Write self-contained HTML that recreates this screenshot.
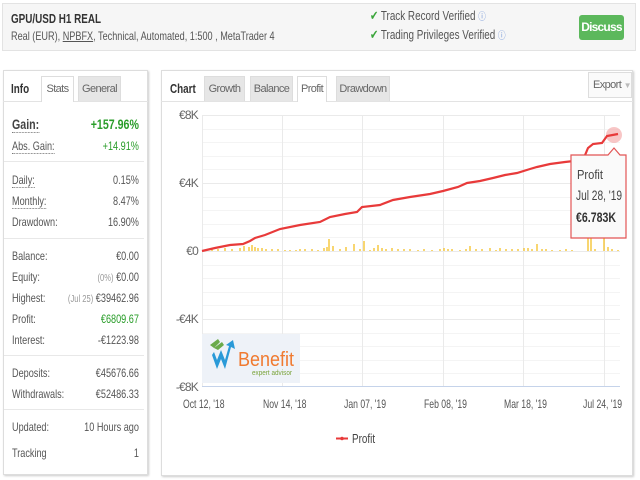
<!DOCTYPE html><html><head><meta charset="utf-8"><style>
*{margin:0;padding:0;box-sizing:border-box}
body{width:640px;height:480px;background:#fff;font-family:"Liberation Sans",sans-serif;font-size:12px;color:#555;position:relative;overflow:hidden}
.a{position:absolute;white-space:nowrap}
.s{transform:scaleX(.76);transform-origin:0 0}
.hdr{left:2px;top:3px;width:634px;height:48px;background:#f6f6f6;border:1px solid #e3e3e3}
.panel{background:#fff;border:1px solid #ddd;box-shadow:1px 1px 2px #ccc}
.tab{position:absolute;height:25px;background:#e6e6e6;border:1px solid #ddd;border-bottom:none;text-align:center;line-height:25px;color:#666;font-size:11px;letter-spacing:-.6px;white-space:nowrap;overflow:hidden}
.tab.on{background:#fff;height:26px}
.row{position:absolute;left:12px;width:167px;white-space:nowrap;transform:scaleX(.76);transform-origin:0 0}
.row span{float:right}
.sep{position:absolute;left:4px;width:140px;border-top:1px solid #e8e8e8}
.g{color:#2a9d2a}
.dl{border-bottom:1px dotted #777;font-style:normal}
.yl{position:absolute;left:158px;width:40px;text-align:right;color:#666;letter-spacing:-.8px}
.xl{position:absolute;top:397px;color:#555;white-space:nowrap;transform:scaleX(.72);transform-origin:0 0}
</style></head><body>
<div class="a hdr"></div>
<div class="a s" style="left:11px;top:11px;font-weight:bold;color:#333;font-size:13px">GPU/USD H1 REAL</div>
<div class="a s" style="left:11px;top:29px;color:#555;font-size:12px">Real (EUR), <u>NPBFX</u>, Technical, Automated, 1:500 , MetaTrader 4</div>
<div class="a s" style="left:370px;top:8px;color:#555;font-size:13px"><span style="color:#3aa53a">✔</span> Track Record Verified <span style="color:#6b8fd6;font-size:10px">ⓘ</span></div>
<div class="a s" style="left:370px;top:27px;color:#555;font-size:13px"><span style="color:#3aa53a">✔</span> Trading Privileges Verified <span style="color:#6b8fd6;font-size:10px">ⓘ</span></div>
<div class="a" style="left:579px;top:15px;width:45px;height:25px;background:#5cb85c;border-radius:3px;color:#fff;font-weight:bold;text-align:center;line-height:25px;font-size:12px;letter-spacing:-.8px">Discuss</div>

<div class="a panel" style="left:3px;top:70px;width:145px;height:405px"></div>
<div class="a s" style="left:11px;top:81px;font-weight:bold;color:#333;font-size:13px">Info</div>
<div class="tab" style="left:78px;top:76px;width:43px">General</div>
<div class="a" style="left:3px;top:101px;width:145px;border-top:1px solid #e3e3e3"></div>
<div class="tab on" style="left:41px;top:76px;width:33px">Stats</div>

<div class="row" style="top:116px;font-weight:bold;font-size:14px;color:#444"><b class="dl">Gain:</b><span class="g">+157.96%</span></div>
<div class="row" style="top:139px"><i class="dl">Abs. Gain:</i><span class="g">+14.91%</span></div>
<div class="sep" style="top:161px"></div>
<div class="row" style="top:173px"><i class="dl">Daily:</i><span>0.15%</span></div>
<div class="row" style="top:194px"><i class="dl">Monthly:</i><span>8.47%</span></div>
<div class="row" style="top:215px">Drawdown:<span>16.90%</span></div>
<div class="sep" style="top:238px"></div>
<div class="row" style="top:249px">Balance:<span>€0.00</span></div>
<div class="row" style="top:270px">Equity:<span><small style="color:#999">(0%)</small> €0.00</span></div>
<div class="row" style="top:291px">Highest:<span><small style="color:#999;font-size:10px">(Jul 25)</small> €39462.96</span></div>
<div class="row" style="top:312px">Profit:<span class="g">€6809.67</span></div>
<div class="row" style="top:333px">Interest:<span>-€1223.98</span></div>
<div class="sep" style="top:355px"></div>
<div class="row" style="top:366px">Deposits:<span>€45676.66</span></div>
<div class="row" style="top:387px">Withdrawals:<span>€52486.33</span></div>
<div class="sep" style="top:409px"></div>
<div class="row" style="top:420px">Updated:<span>10 Hours ago</span></div>
<div class="row" style="top:446px">Tracking<span>1</span></div>

<div class="a panel" style="left:161px;top:70px;width:472px;height:406px"></div>
<div class="a s" style="left:170px;top:81px;font-weight:bold;color:#333;font-size:13px">Chart</div>
<div class="a" style="left:161px;top:101px;width:472px;border-top:1px solid #e3e3e3"></div>
<div class="tab" style="left:204px;top:76px;width:41px">Growth</div>
<div class="tab" style="left:250px;top:76px;width:43px">Balance</div>
<div class="tab on" style="left:297px;top:76px;width:30px">Profit</div>
<div class="tab" style="left:336px;top:76px;width:54px">Drawdown</div>
<div class="a" style="left:588px;top:72px;width:44px;height:26px;border:1px solid #ddd;background:#fafafa;line-height:25px;padding-left:4px;color:#666;font-size:11px;letter-spacing:-.6px">Export <span style="color:#bbb;font-size:8px">▼</span></div>

<div class="yl" style="top:108px">€8K</div>
<div class="yl" style="top:176px">€4K</div>
<div class="yl" style="top:244px">€0</div>
<div class="yl" style="top:312px">-€4K</div>
<div class="yl" style="top:380px">-€8K</div>

<svg class="a" style="left:0;top:0" width="640" height="480">
<g stroke="#f4f4f4" stroke-width="1">
<path d="M202 129.5H620M202 142.5H620M202 156.5H620M202 169.5H620M202 197.5H620M202 210.5H620M202 224.5H620M202 237.5H620M202 265.5H620M202 278.5H620M202 292.5H620M202 305.5H620M202 333.5H620M202 346.5H620M202 360.5H620M202 373.5H620"/>
</g>
<g stroke="#eaeaea" stroke-width="1">
<path d="M202 115.5H620M202 183.5H620M202 251.5H620M202 319.5H620"/>
<path d="M202.5 115V387M282.5 115V387M362.5 115V387M443.5 115V387M523.5 115V387M604.5 115V387"/>
</g>
<path d="M202 386.5H620" stroke="#c5d3ea"/>
<g stroke="#f5c842" stroke-width="1.5">
<path d="M212 251v-2M218 251v-2M225 251v-3M232 251v-2M240 251v-3M244 251v-5M249 251v-4M252 251v-6M255 251v-4M258 251v-3M262 251v-3M266 251v-2M272 251v-2M278 251v-2M285 251v-1M290 251v-1M296 251v-1M300 251v-2M305 251v-2M312 251v-2M318 251v-1M324 251v-3M327 251v-4M329 251v-12M333 251v-5M340 251v-2M346 251v-4M354 251v-7M360 251v-2M364 251v-10M370 251v-1M374 251v-3M378 251v-6M382 251v-3M386 251v-2M392 251v-3M398 251v-2M404 251v-2M410 251v-2M418 251v-1M424 251v-2M432 251v-1M440 251v-2M444 251v-3M448 251v-2M452 251v-2M460 251v-1M466 251v-2M470 251v-5M476 251v-2M482 251v-2M490 251v-3M496 251v-1M500 251v-3M506 251v-2M512 251v-2M518 251v-2M524 251v-3M528 251v-3M532 251v-2M537 251v-7M542 251v-2M546 251v-2M552 251v-1M560 251v-1M566 251v-2M572 251v-1M588 251v-24M591 251v-22M595 251v-2M604 251v-28M608 251v-4M612 251v-2M618 251v-1"/>
</g>
<circle cx="614" cy="135" r="8" fill="#f4a0a0" opacity=".6"/>
<path d="M202 251L215 248L230 245L243 244L250 241L255 238L265 235L280 229L300 225L320 222L330 217L345 214L357 212L362 207L380 205L393 200L410 197L430 194L443 191L458 187L467 183L480 181L493 178L505 175L517 173L530 169L537 167L550 164L565 162L583 160L588 148L593 144L602 143L607 136L618 134" fill="none" stroke="#e83a3a" stroke-width="2.2"/>
<path d="M571 155H608L614 148L620 155H626V238H571Z" fill="#fafafa" stroke="#e25555" stroke-width="1.2"/>
<g font-family="Liberation Sans,sans-serif" fill="#444">
<text x="577" y="179" font-size="13" textLength="26" lengthAdjust="spacingAndGlyphs">Profit</text>
<text x="576" y="200" font-size="14" textLength="46" lengthAdjust="spacingAndGlyphs">Jul 28, '19</text>
<text x="576" y="222" font-size="14" font-weight="bold" fill="#333" textLength="40" lengthAdjust="spacingAndGlyphs">€6.783K</text>
</g>
<rect x="202" y="334" width="98" height="49" fill="#eef2f8"/>
<path d="M210 345l8 -6 2 3 -6 6z M214 348l8-6 2 3-6 5z" fill="#6aaa4a"/>
<path d="M212 355l5 14 4-10 4 10 6-22 4 2-2-9-7 5 3 1-4 14-4-10-4 10-3-8z" fill="#2a9ad8"/>
<text x="238" y="366" font-family="Liberation Sans,sans-serif" font-size="20" fill="#f07a30" textLength="56" lengthAdjust="spacingAndGlyphs">Benefit</text>
<text x="252" y="375" font-family="Liberation Sans,sans-serif" font-size="7" fill="#7aa33a" textLength="40" lengthAdjust="spacingAndGlyphs">expert advisor</text>
<path d="M336 438.5H348" stroke="#e83a3a" stroke-width="2"/><circle cx="342" cy="438.5" r="1.8" fill="#e83a3a"/>
</svg>
<div class="xl" style="left:183px">Oct 12, '18</div>
<div class="xl" style="left:263px">Nov 14, '18</div>
<div class="xl" style="left:344px">Jan 07, '19</div>
<div class="xl" style="left:424px">Feb 08, '19</div>
<div class="xl" style="left:504px">Mar 18, '19</div>
<div class="xl" style="left:583px">Jul 24, '19</div>
<div class="a s" style="left:352px;top:431px;color:#444;font-size:13px">Profit</div>
</body></html>
